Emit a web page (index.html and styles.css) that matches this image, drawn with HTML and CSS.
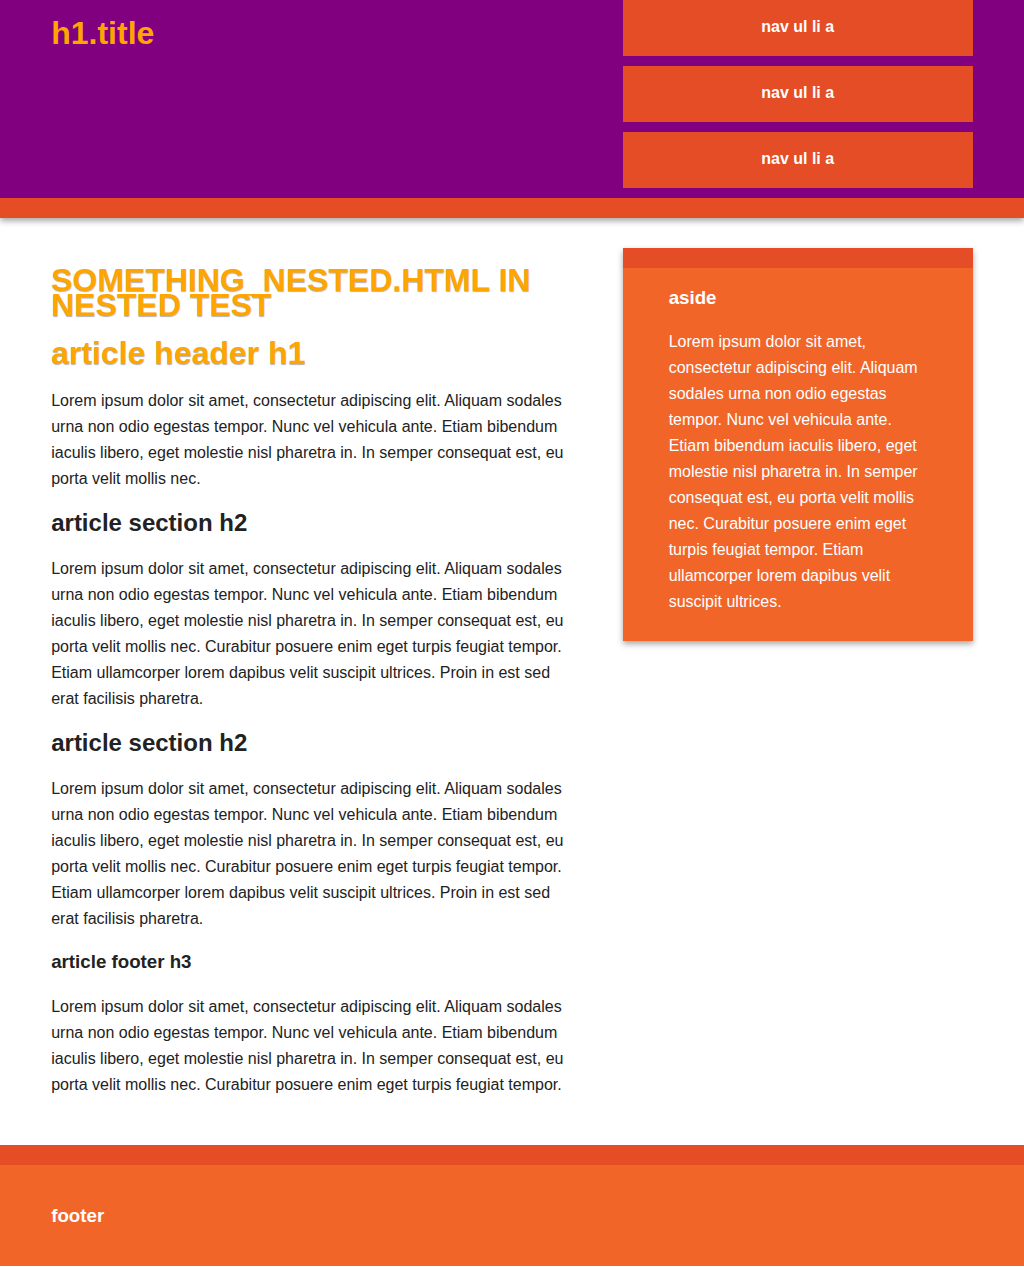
FILE: index.html
```html
<!DOCTYPE html>
<html lang="en">
<head>
<meta charset="utf-8">
<title>h1.title</title>
<link rel="stylesheet" href="styles.css">
</head>
<body>
<div class="header-container">
  <header class="wrapper header">
    <h1 class="title">h1.title</h1>
    <nav class="nav">
      <ul class="nav-list">
        <li><a class="nav-link" href="#">nav ul li a</a></li>
        <li><a class="nav-link" href="#">nav ul li a</a></li>
        <li><a class="nav-link" href="#">nav ul li a</a></li>
      </ul>
    </nav>
  </header>
</div>

<div class="main-container">
  <div class="main wrapper">
    <article class="article">
      <h1 class="page-heading">SOMETHING_NESTED.HTML IN NESTED TEST</h1>
      <header>
        <h1 class="article-heading">article header h1</h1>
        <p class="text">Lorem ipsum dolor sit amet, consectetur adipiscing elit. Aliquam sodales urna non odio egestas tempor. Nunc vel vehicula ante. Etiam bibendum iaculis libero, eget molestie nisl pharetra in. In semper consequat est, eu porta velit mollis nec.</p>
      </header>
      <section>
        <h2 class="section-heading">article section h2</h2>
        <p class="text">Lorem ipsum dolor sit amet, consectetur adipiscing elit. Aliquam sodales urna non odio egestas tempor. Nunc vel vehicula ante. Etiam bibendum iaculis libero, eget molestie nisl pharetra in. In semper consequat est, eu porta velit mollis nec. Curabitur posuere enim eget turpis feugiat tempor. Etiam ullamcorper lorem dapibus velit suscipit ultrices. Proin in est sed erat facilisis pharetra.</p>
      </section>
      <section>
        <h2 class="section-heading">article section h2</h2>
        <p class="text">Lorem ipsum dolor sit amet, consectetur adipiscing elit. Aliquam sodales urna non odio egestas tempor. Nunc vel vehicula ante. Etiam bibendum iaculis libero, eget molestie nisl pharetra in. In semper consequat est, eu porta velit mollis nec. Curabitur posuere enim eget turpis feugiat tempor. Etiam ullamcorper lorem dapibus velit suscipit ultrices. Proin in est sed erat facilisis pharetra.</p>
      </section>
      <footer>
        <h3 class="small-heading">article footer h3</h3>
        <p class="text">Lorem ipsum dolor sit amet, consectetur adipiscing elit. Aliquam sodales urna non odio egestas tempor. Nunc vel vehicula ante. Etiam bibendum iaculis libero, eget molestie nisl pharetra in. In semper consequat est, eu porta velit mollis nec. Curabitur posuere enim eget turpis feugiat tempor.</p>
      </footer>
    </article>

    <aside class="aside">
      <h3 class="small-heading aside-heading">aside</h3>
      <p class="text">Lorem ipsum dolor sit amet, consectetur adipiscing elit. Aliquam sodales urna non odio egestas tempor. Nunc vel vehicula ante. Etiam bibendum iaculis libero, eget molestie nisl pharetra in. In semper consequat est, eu porta velit mollis nec. Curabitur posuere enim eget turpis feugiat tempor. Etiam ullamcorper lorem dapibus velit suscipit ultrices.</p>
    </aside>
  </div>
</div>

<div class="footer-container">
  <footer class="wrapper footer">
    <h3 class="small-heading footer-heading">footer</h3>
  </footer>
</div>
</body>
</html>
```

FILE: styles.css
```css
html {
  color: #222;
  font-size: 16px;
  line-height: 26px;
}

body {
  margin: 0;
  font-family: "Liberation Sans", Arial, Helvetica, sans-serif;
  background: #fff;
}

.wrapper {
  width: 90%;
  margin: 0 5%;
}

/* Header */
.header-container {
  position: relative;
  z-index: 2;
  background: #800080;
  border-bottom: 20px solid #e44d26;
  box-shadow: 0 3px 6px rgba(0, 0, 0, 0.35);
}

.header {
  display: flex;
  justify-content: space-between;
  align-items: flex-start;
}

.title {
  margin: 20px 0 0;
  font-size: 32px;
  line-height: 26px;
  font-weight: bold;
  color: #ffa500;
}

.nav {
  width: 38%;
}

.nav-list {
  list-style: none;
  margin: 0;
  padding: 0;
}

.nav-link {
  display: block;
  margin-bottom: 10px;
  padding: 14px 0 16px;
  text-align: center;
  text-decoration: none;
  font-weight: bold;
  color: #fff;
  background: #e44d26;
}

/* Main */
.main-container {
  position: relative;
  z-index: 1;
}

.main {
  display: flex;
  justify-content: space-between;
  align-items: flex-start;
  padding: 30px 0 31px;
}

.article {
  width: 57%;
}

.text {
  margin: 16px 0;
}

.page-heading {
  margin: 19.8px 0 21.44px;
  font-size: 32px;
  line-height: 25.6px;
  font-weight: bold;
  color: #ffa500;
  text-shadow: 0 1px 1px rgba(0, 0, 0, 0.3);
}

.article-heading {
  margin: 21.44px 0;
  font-size: 32px;
  font-weight: bold;
  color: #ffa500;
  text-shadow: 0 1px 1px rgba(0, 0, 0, 0.3);
}

.section-heading {
  margin: 18.3px 0 19.92px;
  font-size: 24px;
  font-weight: bold;
}

.small-heading {
  margin: 17px 0 18.72px;
  font-size: 18.72px;
  font-weight: bold;
}

/* Aside */
.aside {
  box-sizing: border-box;
  width: 38%;
  padding: 0 5% 10px;
  color: #fff;
  background: #f16529;
  border-top: 20px solid #e44d26;
  box-shadow: 0 3px 6px rgba(0, 0, 0, 0.35);
}

.aside-heading {
  margin-top: 16.5px;
}

/* Footer */
.footer-container {
  background: #f16529;
  border-top: 20px solid #e44d26;
}

.footer {
  padding: 20px 0 17.5px;
  color: #fff;
}

.footer-heading {
  margin-top: 18.5px;
}
```
